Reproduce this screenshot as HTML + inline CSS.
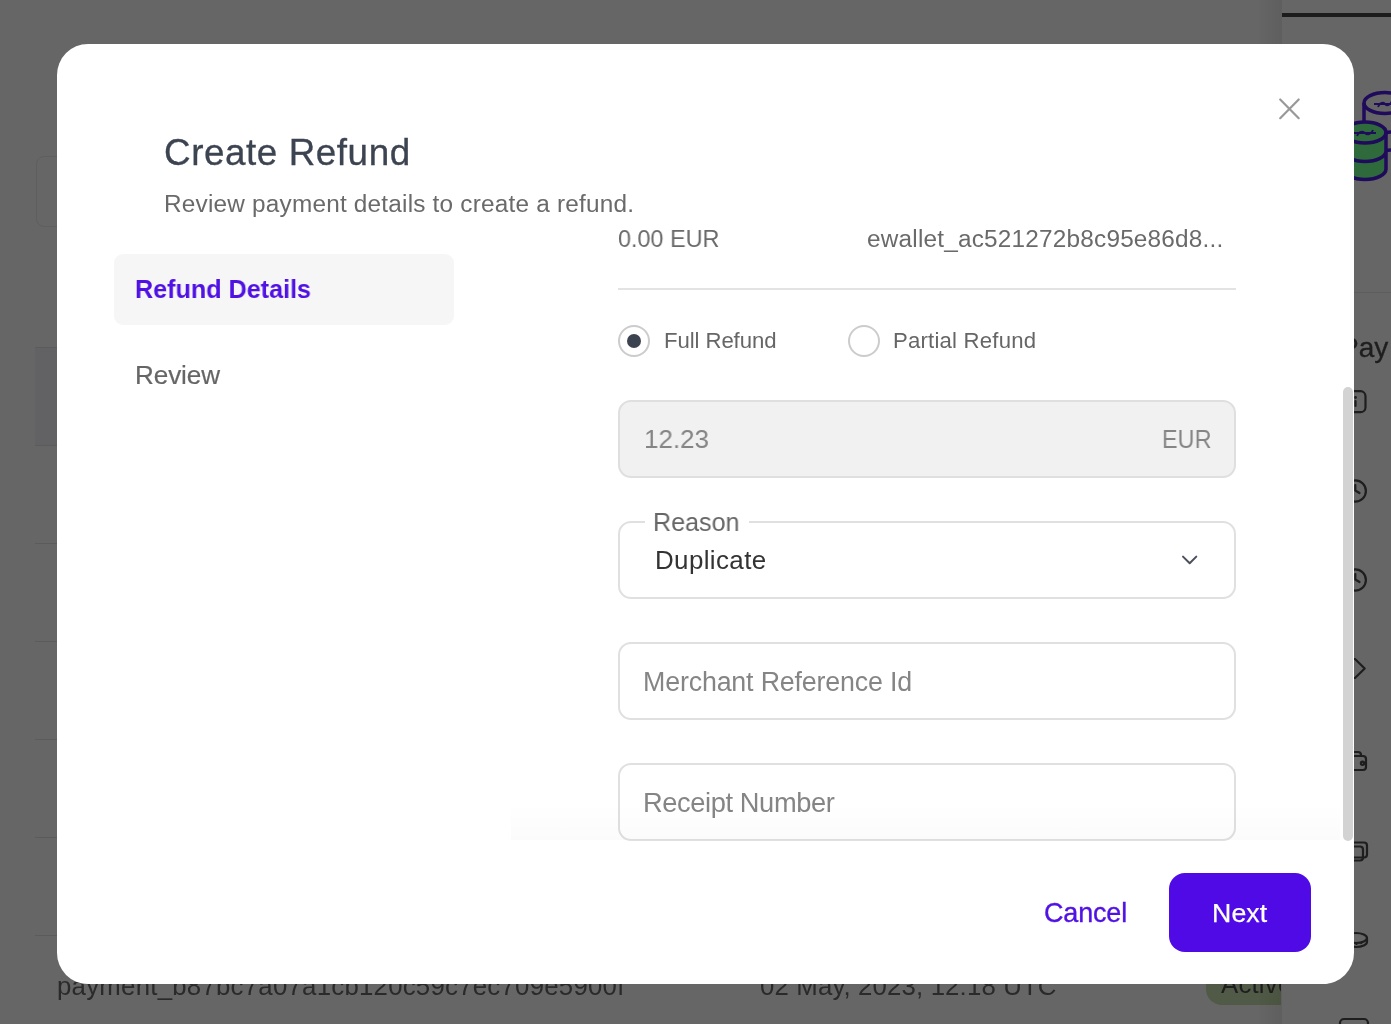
<!DOCTYPE html>
<html><head><meta charset="utf-8"><style>
html,body{margin:0;padding:0;}
body{width:1391px;height:1024px;overflow:hidden;position:relative;background:#666666;font-family:"Liberation Sans",sans-serif;}
.a{position:absolute;}
.t{position:absolute;line-height:1;white-space:nowrap;font-family:"Liberation Sans",sans-serif;will-change:transform;}
</style></head><body>
<!-- background page (under overlay) -->
<div class="a" style="left:36px;top:156px;width:40px;height:69px;border:1px solid #5f5f5f;border-radius:8px;"></div>
<div class="a" style="left:35px;top:347px;width:30px;height:97px;background:#626264;border-top:1px solid #5b5b5b;border-bottom:1px solid #5b5b5b;"></div>
<div class="a" style="left:35px;top:543px;width:30px;height:1px;background:#5b5b5b;"></div>
<div class="a" style="left:35px;top:641px;width:30px;height:1px;background:#5b5b5b;"></div>
<div class="a" style="left:35px;top:739px;width:30px;height:1px;background:#5b5b5b;"></div>
<div class="a" style="left:35px;top:837px;width:30px;height:1px;background:#5b5b5b;"></div>
<div class="a" style="left:35px;top:935px;width:30px;height:1px;background:#5b5b5b;"></div>
<div class='t' style='left:57.4px;top:974.2px;font-size:25.8px;letter-spacing:0.241px;font-weight:normal;color:#2a2a2a;'>payment_b87bc7a07a1cb120c59c7ec709e5900f</div>
<div class='t' style='left:759.8px;top:974.2px;font-size:25.8px;letter-spacing:0.136px;font-weight:normal;color:#2a2a2a;'>02 May, 2023, 12:18 UTC</div>
<div class="a" style="left:1206px;top:960px;width:110px;height:45px;border-radius:16px;background:#505a46;"></div>
<div class="t" style="left:1220.5px;top:971.5px;font-size:25.8px;color:#1e1e1e;letter-spacing:0.2px">Active</div>
<!-- right panel -->
<div class="a" style="left:1258px;top:0;width:24px;height:1024px;background:linear-gradient(to right,rgba(0,0,0,0),rgba(0,0,0,0.07));"></div>
<div class="a" style="left:1281px;top:0;width:110px;height:1024px;background:#666666;border-left:1px solid #5f5f5f;"></div>
<div class="a" style="left:1282px;top:13px;width:109px;height:4px;background:#1c1c1c;"></div>
<div class="a" style="left:1354px;top:292px;width:37px;height:1px;background:#5d5d5d;"></div>
<div class="t" style="left:1339.5px;top:334px;font-size:28px;color:#1e1e1e;-webkit-text-stroke:0.3px #1e1e1e;">Pay</div>
<svg class="a" style="left:1330px;top:80px" width="61" height="944" viewBox="1330 80 61 944">
 <!-- back coin -->
 <g fill="none" stroke="#1f0a5c" stroke-width="3.5">
  <ellipse cx="1385" cy="103" rx="21" ry="10.5"/>
  <path d="M1364 103 V124 M1364 122 A21 10.5 0 0 0 1406 122 M1364 140 A21 10.5 0 0 0 1406 140"/>
 </g>
 <path d="M1374 104 H1392 M1378 107 c2 -5 6 -5 7 -3 c1 2 5 2 7 -3" fill="none" stroke="#1f0a5c" stroke-width="1.8"/>
 <!-- front coin -->
 <path d="M1344 132.5 A21 10.5 0 0 1 1386 132.5 V169 A21 10.5 0 0 1 1344 169 Z" fill="#2f6a3c"/>
 <g fill="none" stroke="#1f0a5c" stroke-width="3.5">
  <ellipse cx="1365" cy="132.5" rx="21" ry="10.5"/>
  <path d="M1386 132.5 V169 A21 10.5 0 0 1 1344 169 M1344 151 A21 10.5 0 0 0 1386 151"/>
 </g>
 <path d="M1354 133 H1376 M1357 136 c2 -5 6 -5 8 -3 c2 2 6 2 8 -3" fill="none" stroke="#1f0a5c" stroke-width="1.8"/>
 <!-- side icons -->
 <g fill="none" stroke="#1e1e1e" stroke-width="2.2" stroke-linecap="round" stroke-linejoin="round">
  <rect x="1344" y="391.2" width="21.5" height="21" rx="5"/>
  <path d="M1355.5 401 V406"/>
  <circle cx="1355.3" cy="491" r="10.6"/>
  <path d="M1355.3 485 V490.5 L1359.5 493"/>
  <circle cx="1355.3" cy="580" r="10.6"/>
  <path d="M1355.3 574 V579.5 L1359.5 582"/>
  <path d="M1344 659 H1355 L1364.7 668.5 L1355 678 H1344"/>
  <path d="M1344 752 H1358 Q1361 752 1361 755 M1344 756 H1363 Q1366 756 1366 759 V767 Q1366 770 1363 770 H1344"/>
  <circle cx="1362.5" cy="763.2" r="1.6"/>
  <rect x="1340" y="842.5" width="27" height="15" rx="3"/>
  <rect x="1336" y="846.5" width="27" height="14" rx="3"/>
  <ellipse cx="1356" cy="938" rx="11" ry="5"/>
  <path d="M1345 938 V942 A11 5 0 0 0 1367 942 V938"/>
  <path d="M1350 943.5 l1 0.5 M1356 944.5 h1 M1361 943.5 l1 -0.5" stroke-width="1.2"/>
  <rect x="1340" y="1019" width="28" height="20" rx="4"/>
 </g>
 <circle cx="1355.5" cy="397.5" r="1.4" fill="#1e1e1e"/>
</svg>

<!-- modal -->
<div class="a" style="left:57px;top:44px;width:1297px;height:940px;background:#fff;border-radius:31px;"></div>
<div class="a" style="left:114px;top:254px;width:340px;height:71px;background:#f6f6f6;border-radius:9px;"></div>
<div class="a" style="left:618px;top:288px;width:618px;height:2px;background:#e3e3e3;"></div>
<!-- radios -->
<div class="a" style="left:618px;top:325px;width:28px;height:28px;border:2px solid #cccccc;border-radius:50%;"></div>
<div class="a" style="left:627px;top:334px;width:14px;height:14px;background:#3c4350;border-radius:50%;"></div>
<div class="a" style="left:848px;top:325px;width:28px;height:28px;border:2px solid #cccccc;border-radius:50%;"></div>
<!-- amount -->
<div class="a" style="left:618px;top:400px;width:614px;height:74px;background:#f1f1f1;border:2px solid #dfdfdf;border-radius:13px;"></div>
<!-- reason -->
<div class="a" style="left:618px;top:521px;width:614px;height:74px;border:2px solid #e0e0e0;border-radius:13px;"></div>
<div class="a" style="left:645px;top:518px;width:104px;height:8px;background:#fff;"></div>
<svg class="a" style="left:1170px;top:540px" width="40" height="40" viewBox="1170 540 40 40">
<polyline points="1183,556.6 1189.7,563.2 1196.3,556.6" fill="none" stroke="#4a4f5a" stroke-width="2" stroke-linecap="round" stroke-linejoin="round"/></svg>
<!-- merchant ref / receipt -->
<div class="a" style="left:618px;top:642px;width:614px;height:74px;border:2px solid #e0e0e0;border-radius:13px;"></div>
<div class="a" style="left:618px;top:763px;width:614px;height:74px;border:2px solid #e0e0e0;border-radius:13px;"></div>
<!-- scroll fade -->
<div class="a" style="left:511px;top:803px;width:829px;height:37px;background:linear-gradient(to bottom,rgba(0,0,0,0),rgba(0,0,0,0.016));"></div>
<!-- scrollbar -->
<div class="a" style="left:1343px;top:387px;width:9.5px;height:454px;background:#d3d3d3;border-radius:5px;"></div>
<!-- close -->
<svg class="a" style="left:1270px;top:90px" width="40" height="40" viewBox="1270 90 40 40">
<path d="M1280.2 99.5 L1298.7 118.2 M1298.7 99.5 L1280.2 118.2" stroke="#999999" stroke-width="2.2" stroke-linecap="round"/></svg>
<!-- next btn -->
<div class="a" style="left:1169px;top:873px;width:142px;height:79px;background:#4f0ae6;border-radius:16px;"></div>
<div class='t' style='left:163.9px;top:134.7px;font-size:36.81px;letter-spacing:0.567px;font-weight:normal;color:#3d4451;-webkit-text-stroke:0.3px #3d4451;'>Create Refund</div>
<div class='t' style='left:163.5px;top:191.9px;font-size:24.35px;letter-spacing:0.207px;font-weight:normal;color:#6a6a6a;'>Review payment details to create a refund.</div>
<div class='t' style='left:134.5px;top:276.2px;font-size:26.67px;letter-spacing:0.0px;font-weight:bold;color:#5012e4;transform:scaleX(0.9429);transform-origin:0 0;'>Refund Details</div>
<div class='t' style='left:134.5px;top:362.0px;font-size:26.09px;letter-spacing:-0.1px;font-weight:normal;color:#666666;-webkit-text-stroke:0.2px #666666;'>Review</div>
<div class='t' style='left:617.7px;top:226.5px;font-size:24.35px;letter-spacing:0.0px;font-weight:normal;color:#6a6a6a;transform:scaleX(0.9602);transform-origin:0 0;'>0.00 EUR</div>
<div class='t' style='left:867.2px;top:226.5px;font-size:24.35px;letter-spacing:0.204px;font-weight:normal;color:#6a6a6a;'>ewallet_ac521272b8c95e86d8...</div>
<div class='t' style='left:663.8px;top:329.8px;font-size:22.17px;letter-spacing:-0.08px;font-weight:normal;color:#666666;'>Full Refund</div>
<div class='t' style='left:893.1px;top:329.8px;font-size:22.17px;letter-spacing:0.2px;font-weight:normal;color:#666666;'>Partial Refund</div>
<div class='t' style='left:643.5px;top:425.8px;font-size:26.52px;letter-spacing:0.0px;font-weight:normal;color:#858585;transform:scaleX(0.981);transform-origin:0 0;'>12.23</div>
<div class='t' style='left:1161.9px;top:425.8px;font-size:26.38px;letter-spacing:0.0px;font-weight:normal;color:#858585;transform:scaleX(0.8885);transform-origin:0 0;'>EUR</div>
<div class='t' style='left:653.0px;top:508.7px;font-size:26.23px;letter-spacing:0.0px;font-weight:normal;color:#666666;transform:scaleX(0.9575);transform-origin:0 0;'>Reason</div>
<div class='t' style='left:654.8px;top:547.6px;font-size:25.94px;letter-spacing:0.375px;font-weight:normal;color:#333333;'>Duplicate</div>
<div class='t' style='left:643.3px;top:668.5px;font-size:26.81px;letter-spacing:-0.165px;font-weight:normal;color:#858585;'>Merchant Reference Id</div>
<div class='t' style='left:643.0px;top:788.7px;font-size:27.25px;letter-spacing:-0.392px;font-weight:normal;color:#858585;'>Receipt Number</div>
<div class='t' style='left:1044.0px;top:899.8px;font-size:26.96px;letter-spacing:-0.14px;font-weight:normal;color:#5012e4;-webkit-text-stroke:0.35px #5012e4;'>Cancel</div>
<div class='t' style='left:1211.8px;top:899.7px;font-size:26.67px;letter-spacing:0.133px;font-weight:normal;color:#ffffff;-webkit-text-stroke:0.25px #ffffff;'>Next</div>
</body></html>
